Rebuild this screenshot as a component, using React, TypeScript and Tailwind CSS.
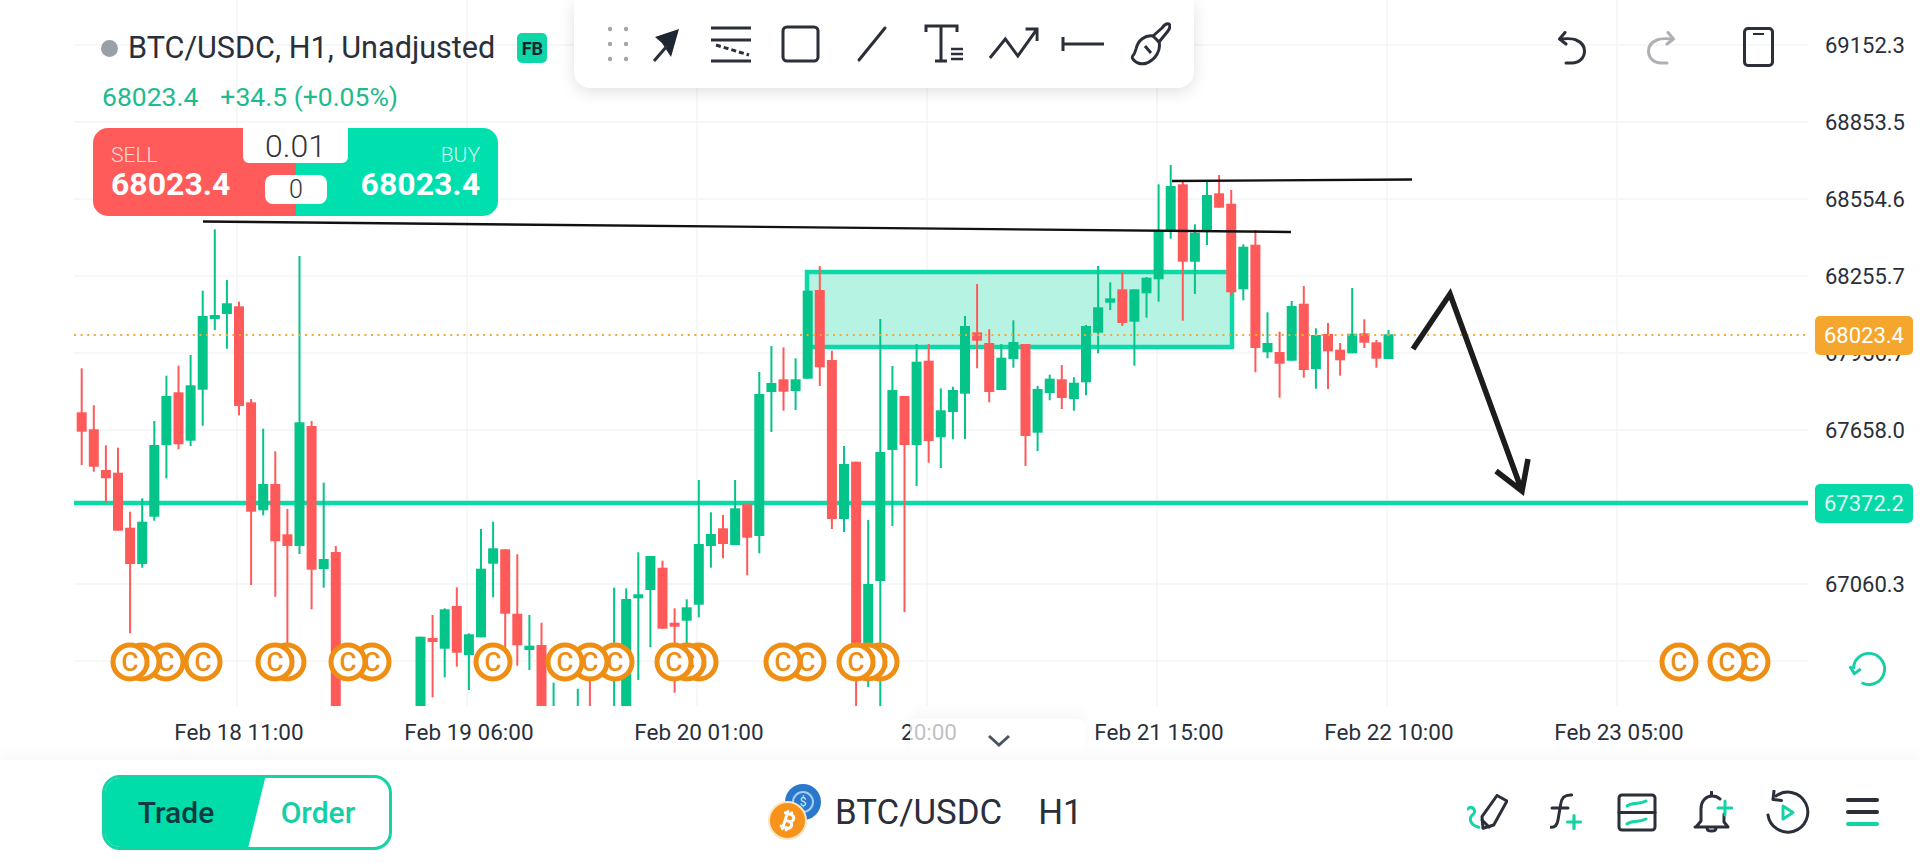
import { Bitcoin } from 'lucide-react';

type Candle = [up: boolean, wickTop: number, bodyTop: number, bodyBottom: number, wickBottom: number] | null;

const G = true;
const R = false;

// Hourly candles, y in chart pixels. Nulls are bars that sit below the visible pane.
const CANDLES: Candle[] = [
  [R, 368.3, 412.3, 431.7, 465], [R, 405.3, 429.3, 466.7, 471.7], [R, 445.3, 470, 478.3, 502.7],
  [R, 447.7, 472.7, 530.7, 530.7], [R, 511.7, 527.7, 564, 633.3], [G, 498.3, 521.7, 564, 567.7],
  [G, 421, 445, 516.7, 520.7], [G, 375.7, 396, 445, 478.3], [R, 365.7, 392.3, 444.3, 449.3],
  [G, 355, 385.3, 440.7, 446], [G, 290.7, 316, 389.7, 425.7], [G, 229.3, 315, 319, 330],
  [G, 280, 303.3, 314, 348.7], [R, 301.7, 306.3, 406, 415.3], [R, 399, 402.3, 511.7, 585],
  [G, 428.7, 484, 510.3, 515.3], [R, 451.3, 484, 541.3, 596.7], [R, 509, 534.3, 546, 650],
  [G, 256, 422.3, 546, 554], [R, 421, 426, 569.7, 609.3], [G, 482.7, 559, 569, 587.7],
  [R, 546, 552, 720, 720], null, null, null, null, null, null,
  [G, 636.7, 636.7, 720, 720], [R, 615, 638, 642, 697.3], [G, 608.3, 609.3, 648.7, 677.3],
  [R, 587.3, 606, 652.7, 666.7], [G, 633.3, 634.3, 655, 690], [G, 529, 568.7, 637.3, 637.3],
  [G, 521.7, 548.3, 563.7, 597.3], [R, 549.3, 549.3, 613.7, 648.3], [R, 554.3, 613.7, 645.3, 665.7],
  [G, 615, 645.7, 650, 670], [R, 622.7, 645, 720, 720], [G, 682.7, 730, 740, 740], null,
  [G, 688.7, 730, 740, 740], [R, 670, 730, 740, 740], null, [G, 587.7, 730, 740, 740],
  [G, 588.3, 599, 720, 720], [G, 552.3, 594.3, 598.3, 680], [G, 556, 556, 590, 647.3],
  [R, 560.7, 567.7, 628.7, 628.7], [R, 608.3, 622.7, 626.7, 692.7], [G, 599.3, 607.3, 620.7, 643.3],
  [G, 480, 544, 604.7, 617.3], [G, 512.3, 534, 546, 567.7], [R, 515, 528.3, 544, 558.3],
  [G, 480, 508.3, 545, 545], [R, 503.3, 504.3, 537.7, 575.3], [G, 372, 394, 536, 553.3],
  [G, 346, 383, 392, 432], [R, 347.3, 379.3, 391.7, 410.7], [G, 358.3, 379.3, 391, 410],
  [G, 290.7, 290.7, 378.7, 378.7], [R, 266, 290, 367.3, 386], [R, 350.7, 360, 519, 529],
  [G, 446, 464, 519, 532], [R, 461.7, 461.7, 660, 706], [G, 520, 584, 660, 687],
  [G, 319, 452, 581, 706], [G, 366, 390, 450, 526], [R, 396, 396, 445, 612],
  [G, 344, 361.7, 445, 486], [R, 344, 360.7, 441, 462.7], [G, 388.3, 410.3, 437.3, 468],
  [G, 386.7, 390, 412, 439.3], [G, 316, 326, 393.7, 439], [R, 284, 332.3, 340.7, 368.3],
  [R, 329.3, 343, 392, 402.3], [G, 344, 357.7, 390, 390], [G, 320.3, 342, 359, 367.7],
  [R, 344, 344, 436, 466], [G, 386, 389, 432.7, 451], [G, 374.7, 378.7, 393, 400.3],
  [R, 365, 379.3, 398, 409], [G, 377.3, 382.7, 399, 410.7], [G, 325, 326, 382.3, 395.3],
  [G, 266, 307.3, 332.7, 353.3], [G, 282.3, 298.3, 302.7, 310], [R, 271.7, 289.3, 323, 326],
  [G, 289.3, 289.3, 321.7, 365.7], [G, 277, 277.7, 293.3, 317.7], [G, 184.3, 230.7, 279.3, 301.7],
  [G, 165, 186, 230, 238.7], [R, 180.7, 184.3, 261.7, 320.7], [G, 224.3, 232.7, 261.7, 294],
  [G, 180.7, 195, 231.7, 245], [R, 175, 193.3, 207.7, 207.7], [R, 190, 203.7, 292.3, 296],
  [G, 244.3, 246.7, 289.3, 300.3], [R, 230, 244.7, 348, 372.3], [G, 312.3, 343, 352.3, 358.3],
  [R, 331.7, 352, 363.7, 397.7], [G, 301, 306, 360.7, 360.7], [R, 286, 303.7, 370, 377.7],
  [G, 328.3, 335, 369, 388.7], [R, 323, 334, 351.3, 389], [R, 343, 349.7, 360.3, 375.7],
  [G, 288, 333.7, 353.3, 353.3], [R, 319.3, 333.3, 342.7, 348], [R, 340, 342.3, 358.7, 367.7],
  [G, 330, 334.3, 359, 359],
];

const GRID_Y = [45, 122, 199, 276, 353, 430, 507, 584, 661];
const GRID_X = [237, 467, 697, 927, 1157, 1387, 1617];
// right to left, so the left marker of an overlapping pair ends up in front
const DIVIDENDS = [1751, 1727, 1679, 880, 868, 856, 807, 783, 699, 687, 674, 615, 590, 565, 493, 372, 348, 287, 275, 203, 166, 142, 130];
const PRICES = ['69152.3', '68853.5', '68554.6', '68255.7', '67956.7', '67658.0', '', '67060.3'];
const TIMES = ['Feb 18 11:00', 'Feb 19 06:00', 'Feb 20 01:00', '20:00', 'Feb 21 15:00', 'Feb 22 10:00', 'Feb 23 05:00'];

const INK = '#2a2f3a';
const TEAL = '#0bd9a8';

function Chart() {
  return (
    <svg width="1808" height="706" className="block">
      <g stroke="#f3f4f5" strokeWidth="1.5">
        {GRID_Y.map((y) => <line key={y} x1="74" x2="1808" y1={y} y2={y} />)}
        {GRID_X.map((x) => <line key={x} x1={x} x2={x} y1="0" y2="706" />)}
      </g>

      <rect x="807" y="272" width="425" height="75" fill="#b7f3e3" stroke={TEAL} strokeWidth="4.5" />
      <line x1="74" x2="1808" y1="503" y2="503" stroke={TEAL} strokeWidth="4.5" />

      {CANDLES.map((c, i) => {
        if (!c) return null;
        const x = 81.7 + 12.1 * i;
        const color = c[0] ? '#05c48a' : '#ff5a5a';
        return (
          <g key={i} fill={color}>
            <rect x={x - 1} y={c[1]} width="2" height={c[4] - c[1]} />
            <rect x={x - 5} y={c[2]} width="10" height={c[3] - c[2]} />
          </g>
        );
      })}

      <line x1="74" x2="1808" y1="335" y2="335" stroke="#f3a93a" strokeWidth="2" strokeDasharray="2 4.6" />

      <line x1="203" y1="221.5" x2="1291" y2="232" stroke="#111" strokeWidth="2.4" />
      <line x1="1172" y1="181" x2="1412" y2="179.5" stroke="#111" strokeWidth="2.4" />
      <path d="M1413 349L1450 294L1522 491M1496 471L1522 491L1528 459" fill="none" stroke="#1c1c1c" strokeWidth="5.5" />

      {DIVIDENDS.map((x) => (
        <g key={x}>
          <circle cx={x} cy="662" r="17" fill="#fff" stroke="#ee8e12" strokeWidth="5" />
          <text x={x} y="671" textAnchor="middle" fontSize="26" fontWeight="500" fill="#ee8e12" fontFamily="Roboto, sans-serif">C</text>
        </g>
      ))}
    </svg>
  );
}

function TradeWidget() {
  return (
    <div className="relative ml-[1px] mt-[15px] flex h-[88px] w-[405px] overflow-hidden rounded-[15px] text-white">
      <div className="flex w-[203px] flex-col bg-[#ff5b5a] pl-[18px] pt-[15px]">
        <span className="text-[21px] leading-[24px] font-light text-[#ffdcd9]">SELL</span>
        <span className="mt-[1px] text-[32px] leading-[32px] font-bold">68023.4</span>
      </div>
      <div className="flex w-[202px] flex-col items-end bg-[#00dfae] pr-[18px] pt-[15px]">
        <span className="text-[21px] leading-[24px] font-light text-[#d6faef]">BUY</span>
        <span className="mt-[1px] text-[32px] leading-[32px] font-bold">68023.4</span>
      </div>
      <div className="absolute left-[150px] top-0 flex h-[35px] w-[105px] items-center justify-center rounded-b-[6px] bg-white text-[32px] font-light text-[#333]">0.01</div>
      <div className="absolute left-[172px] top-[47px] flex h-[29px] w-[62px] items-center justify-center rounded-[8px] bg-white text-[25px] font-light text-[#333]">0</div>
    </div>
  );
}

function Legend() {
  return (
    <div className="absolute left-[92px] top-[28px]">
      <div className="ml-[9px] flex h-[40px] items-center">
        <span className="h-[17px] w-[17px] rounded-full bg-[#9aa0a8]" />
        <span className="ml-[10px] text-[30.6px] leading-none text-[#2a2f3a]">BTC/USDC, H1, Unadjusted</span>
        <span className="ml-[22px] flex h-[30px] w-[30px] items-center justify-center rounded-[5px] bg-[#0fd6a6] text-[18px] font-bold text-[#123]">FB</span>
      </div>
      <div className="ml-[10px] mt-[13px] flex h-[32px] items-center text-[26.5px] text-[#1dbb8e]">
        <span>68023.4</span>
        <span className="ml-[22px]">+34.5 (+0.05%)</span>
      </div>
      <TradeWidget />
    </div>
  );
}

function DrawingToolbar() {
  const line = { fill: 'none', stroke: INK, strokeWidth: 3 };
  return (
    <div className="absolute left-[574px] top-0 flex h-[88px] w-[620px] items-center rounded-b-[16px] bg-white pl-[32px] shadow-[0_4px_16px_rgba(0,0,0,0.12)]">
      <svg width="24" height="40" viewBox="0 0 24 40" fill="#a3a7ad">
        {[4, 20].flatMap((x) => [5, 20, 35].map((y) => <circle key={`${x}${y}`} cx={x} cy={y} r="2.2" />))}
      </svg>
      <svg className="ml-[16px]" width="40" height="40" viewBox="0 0 40 40">
        <path d="M33 5L9 13L16 19L25 33Z" fill="#1e2533" />
        <path d="M8 37L21 22" {...line} />
      </svg>
      <svg className="ml-[25px]" width="40" height="40" viewBox="0 0 40 40" fill="none" stroke={INK} strokeWidth="3">
        <path d="M0 4H40M0 16H40M0 37H40" />
        <path d="M5 21L38 31" strokeDasharray="5 3" />
      </svg>
      <svg className="ml-[30px]" width="40" height="40" viewBox="0 0 40 40">
        <rect x="2" y="3" width="35" height="34" rx="4" {...line} />
      </svg>
      <svg className="ml-[31px]" width="40" height="40" viewBox="0 0 40 40">
        <path d="M7 36L33 4" {...line} strokeLinecap="round" />
      </svg>
      <svg className="ml-[32px]" width="40" height="40" viewBox="0 0 40 40" fill="none" stroke={INK} strokeWidth="3">
        <path d="M2 8V2H33V8M17 2V37M11 37H23" />
        <path d="M27 25H39M27 30H39M27 35H39" strokeWidth="2.5" />
      </svg>
      <svg className="ml-[25px]" width="50" height="40" viewBox="0 0 52 40" preserveAspectRatio="none">
        <path d="M1 34L17 15L30 32L50 5M38 5H50V17" {...line} />
      </svg>
      <svg className="ml-[22px]" width="44" height="40" viewBox="0 0 44 40">
        <path d="M2 13V27M2 20H43" {...line} />
      </svg>
      <svg className="ml-[26px]" width="40" height="44" viewBox="0 0 40 44">
        <path d="M38 2C35 1 33 3 31 6L22 14L28 20L37 9C39 6 40 4 38 2Z" {...line} strokeLinejoin="round" />
        <path d="M22 14C14 13 7 18 5 27C4 31 3 33 1 35C3 41 10 43 16 41C25 37 30 28 28 20" {...line} strokeLinejoin="round" />
        <path d="M14 24L20 31" {...line} />
      </svg>
    </div>
  );
}

function ChartActions() {
  return (
    <div className="absolute left-[1558px] top-[27px] flex items-start">
      <svg className="mt-[4px]" width="28" height="34" viewBox="0 0 28 34" fill="none" stroke={INK} strokeWidth="3" strokeLinecap="round" strokeLinejoin="round">
        <path d="M3 8C8 7.5 14 7 18 9C24 11.5 26.5 15 26.5 20C26.5 27 21 32 14 32H8" />
        <path d="M7 1.5L1.5 8L8 13" />
      </svg>
      <svg className="ml-[61px] mt-[4px] -scale-x-100" width="28" height="34" viewBox="0 0 28 34" fill="none" stroke="#aeb0b3" strokeWidth="3" strokeLinecap="round" strokeLinejoin="round">
        <path d="M3 8C8 7.5 14 7 18 9C24 11.5 26.5 15 26.5 20C26.5 27 21 32 14 32H8" />
        <path d="M7 1.5L1.5 8L8 13" />
      </svg>
      <div className="relative ml-[68px] h-[40px] w-[31px] rounded-[5px] border-[3px] border-[#2a2f3a]">
        <span className="absolute left-[7px] top-[3px] h-[2px] w-[11px] bg-[#2a2f3a]" />
      </div>
    </div>
  );
}

function PriceAxis() {
  return (
    <div className="relative w-[112px] pt-[7px] pl-[17px] text-[22px] text-[#2a2f3a]">
      {PRICES.map((p, i) => (
        <div key={i} className="flex h-[77px] items-center">{p}</div>
      ))}
      <div className="absolute left-[7px] top-[316px] flex h-[39px] w-[98px] items-center justify-center rounded-[5px] bg-[#f5a62e] text-white">68023.4</div>
      <div className="absolute left-[7px] top-[484px] flex h-[39px] w-[98px] items-center justify-center rounded-[5px] bg-[#05d9a8] text-[#dffaf2]">67372.2</div>
      <svg className="absolute left-[39px] top-[647px]" width="44" height="44" viewBox="-4 -4 48 48" fill="none" stroke="#14cfa3" strokeWidth="3.2">
        <path d="M3 20A17 17 0 1 1 12 35" />
        <path d="M-1 17L4 25L11 20" />
      </svg>
    </div>
  );
}

function TradeToggle() {
  return (
    <div className="relative ml-[102px] flex h-[75px] w-[290px] items-center overflow-hidden rounded-[18px] border-[3px] border-[#14d3a5] text-[30px] font-medium">
      <span className="absolute -left-[29px] -top-[5px] h-[85px] w-[180px] -skew-x-[13.7deg] bg-[#00dcaa]" />
      <span className="relative w-[142px] text-center text-[#0f3a42]">Trade</span>
      <span className="relative w-[142px] text-center text-[#14cfa3]">Order</span>
    </div>
  );
}

function Instrument() {
  return (
    <div className="ml-[376px] flex items-center">
      <div className="relative h-[60px] w-[54px]">
        <div className="absolute left-[17px] top-[2px] flex h-[36px] w-[36px] items-center justify-center rounded-full bg-[#2a78cc]">
          <span className="flex h-[22px] w-[22px] items-center justify-center rounded-full border-2 border-[#a9ccf0] text-[12px] text-[#dcecfb]">$</span>
        </div>
        <div className="absolute left-0 top-[19px] flex h-[39px] w-[39px] items-center justify-center rounded-full border-2 border-[#fde3c0] bg-[#f7931a]">
          <Bitcoin size={24} strokeWidth={3} color="#fff" className="rotate-[8deg]" />
        </div>
      </div>
      <span className="ml-[13px] text-[34.8px] leading-none text-[#2a2f3a]">BTC/USDC</span>
      <span className="ml-[36px] text-[34.8px] leading-none text-[#2a2f3a]">H1</span>
    </div>
  );
}

function BottomIcons() {
  const dark = { fill: 'none', stroke: INK, strokeWidth: 3, strokeLinecap: 'round' as const, strokeLinejoin: 'round' as const };
  const teal = { ...dark, stroke: '#14d3a5' };
  return (
    <div className="ml-auto mr-[41px] flex items-center">
      <svg width="41" height="36" viewBox="0 0 41 36">
        <path d="M1 15C3 12 7 13 7.7 17.7C8 20 3 21 3.3 25C3.5 30 7 32 11.7 33.3" {...teal} />
        <path d="M16 34.3L15 22.7L30 1.5L40 7L26.7 31Z" {...dark} />
        <path d="M15 26L22 33" {...dark} />
      </svg>
      <svg className="ml-[42px]" width="34" height="38" viewBox="0 0 34 38">
        <path d="M21.7 2C14 1.5 11.5 5 10.7 11L8 27C7 33 4 34.5 1 34.3M2 15H18" {...dark} />
        <path d="M24 22.5V35.5M17.5 29H30.5" {...teal} strokeWidth="3.2" />
      </svg>
      <svg className="ml-[33px]" width="40" height="39" viewBox="0 0 40 39">
        <rect x="2" y="2" width="36" height="35" rx="3" {...dark} />
        <path d="M2 19.5H38" {...dark} />
        <path d="M10 13C15 9 21 12 29 8M10 31C15 27 21 30 29 26" {...teal} />
      </svg>
      <svg className="ml-[36px]" width="40" height="42" viewBox="0 0 40 42">
        <path d="M2 36H35M31 23V31L35 36M3 36L8 30V18C8 10 13 5 19 5C22 5 25 6 27 8M18.5 1V4M14 37C14 41 23 41 23 37" {...dark} />
        <path d="M32 10V24M25 17H39" {...teal} />
      </svg>
      <svg className="ml-[33px]" width="44" height="44" viewBox="0 0 44 44">
        <path d="M2 25A20 20 0 1 0 10 6" {...dark} />
        <path d="M8 1L7 9.5L15.5 10.5" {...dark} />
        <path d="M17 16V29L27 22.5Z" {...teal} />
      </svg>
      <div className="ml-[36px] flex w-[33px] flex-col gap-[8px]">
        <span className="h-[4px] rounded-full bg-[#2a2f3a]" />
        <span className="h-[4px] rounded-full bg-[#2a2f3a]" />
        <span className="h-[4px] rounded-full bg-[#14d3a5]" />
      </div>
    </div>
  );
}

export default function App() {
  return (
    <div className="relative flex h-[864px] w-[1920px] flex-col overflow-hidden bg-white font-['Roboto',sans-serif]">
      <div className="flex h-[760px]">
        <div className="relative w-[1808px]">
          <Chart />
          <div className="ml-[124px] flex h-[54px] items-center text-[22.5px] text-[#2a2f3a]">
            {TIMES.map((t) => <span key={t} className="w-[230px] shrink-0 text-center">{t}</span>)}
          </div>
          {/* collapse handle lying over the time axis */}
          <div className="absolute left-[910px] top-[719px] flex h-[41px] w-[175px] items-center rounded-t-[8px] bg-white/70 shadow-[0_-8px_14px_rgba(0,0,0,0.03)]">
            <svg className="ml-[78px] mt-[2px]" width="22" height="14" viewBox="0 0 22 14" fill="none" stroke="#4b5563" strokeWidth="3">
              <path d="M1 2L11 11L21 2" />
            </svg>
          </div>
          <Legend />
          <DrawingToolbar />
          <ChartActions />
        </div>
        <PriceAxis />
      </div>
      <div className="relative flex h-[104px] items-center shadow-[0_-6px_12px_rgba(0,0,0,0.03)]">
        <TradeToggle />
        <Instrument />
        <BottomIcons />
      </div>
    </div>
  );
}
